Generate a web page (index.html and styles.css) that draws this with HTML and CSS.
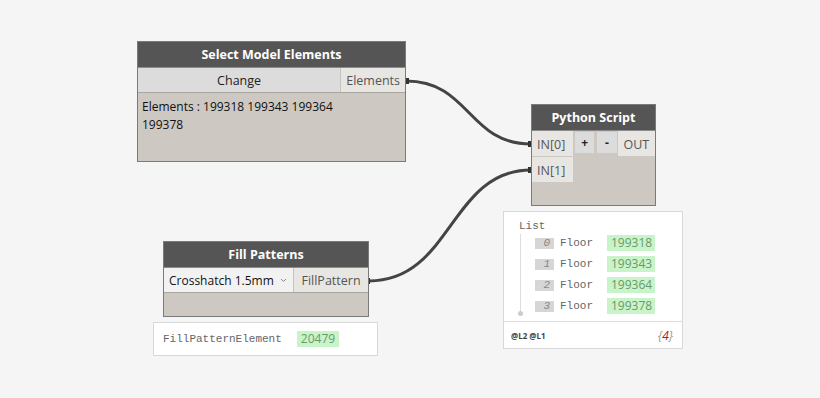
FILE: index.html
```html
<!DOCTYPE html>
<html lang="en">
<head>
    <meta charset="UTF-8">
    <title>Dynamo Graph</title>
    <link rel="stylesheet" href="styles.css">
</head>
<body>
    <div class="canvas">
        <!-- Wires -->
        <svg class="wires" width="820" height="398" viewBox="0 0 820 398">
            <path d="M406 81 C 470 81, 468 144, 531 144" />
            <path d="M369 281 C 452 281, 450 170, 531 170" />
            <rect class="plug" x="405" y="78" width="4" height="6" />
            <rect class="plug" x="528" y="141" width="4" height="6" />
            <rect class="plug" x="366" y="278" width="4" height="6" />
            <rect class="plug" x="528" y="167" width="4" height="6" />
        </svg>

        <!-- Select Model Elements -->
        <div class="node node-select">
            <div class="node-title">Select Model Elements</div>
            <div class="node-row">
                <div class="btn-wide">Change</div>
                <div class="port port-out">Elements</div>
            </div>
            <div class="node-body">
                Elements : 199318 199343 199364<br>199378
            </div>
        </div>

        <!-- Python Script -->
        <div class="node node-python">
            <div class="node-title">Python Script</div>
            <div class="py-grid">
                <div class="py-inputs">
                    <div class="port port-in">IN[0]</div>
                    <div class="port port-in">IN[1]</div>
                </div>
                <div class="py-btn">+</div>
                <div class="py-btn">-</div>
                <div class="port port-out py-out">OUT</div>
            </div>
        </div>

        <div class="watch watch-list">
            <div class="list-body">
                <div class="list-head">List</div>
                <div class="list-items">
                    <div class="list-item"><span class="idx">0</span><span class="lbl">Floor</span><span class="val">199318</span></div>
                    <div class="list-item"><span class="idx">1</span><span class="lbl">Floor</span><span class="val">199343</span></div>
                    <div class="list-item"><span class="idx">2</span><span class="lbl">Floor</span><span class="val">199364</span></div>
                    <div class="list-item"><span class="idx">3</span><span class="lbl">Floor</span><span class="val">199378</span></div>
                </div>
            </div>
            <div class="list-foot">
                <span class="levels">@L2 @L1</span>
                <span class="count">{<em>4</em>}</span>
            </div>
        </div>

        <!-- Fill Patterns -->
        <div class="node node-fill">
            <div class="node-title">Fill Patterns</div>
            <div class="node-row">
                <div class="dropdown">
                    <span>Crosshatch 1.5mm</span>
                    <svg width="7" height="5" viewBox="0 0 7 5"><path d="M1 1 L3.5 3.5 L6 1" /></svg>
                </div>
                <div class="port port-out">FillPattern</div>
            </div>
        </div>

        <div class="watch watch-fill">
            <span class="mono">FillPatternElement</span>
            <span class="val">20479</span>
        </div>
    </div>
</body>
</html>
```

FILE: styles.css
```css
/* General Reset */
* {
    margin: 0;
    padding: 0;
    box-sizing: border-box;
}

body {
    background-color: #f5f5f5;
    font-family: 'Open Sans', 'Noto Sans', sans-serif;
    color: #222;
}

/* Canvas */
.canvas {
    position: relative;
    width: 820px;
    height: 398px;
    overflow: hidden;
}

.wires {
    position: absolute;
    left: 0;
    top: 0;
}

.wires path {
    fill: none;
    stroke: #444;
    stroke-width: 3;
}

.wires .plug {
    fill: #333;
}

/* Nodes */
.node {
    position: absolute;
    border: 1px solid #7a7a7a;
    background: #cdc9c2;
    display: flex;
    flex-direction: column;
}

.node-title {
    height: 26px;
    background: #555;
    color: #fff;
    font-weight: bold;
    font-size: 12.5px;
    display: flex;
    align-items: center;
    justify-content: center;
    border-bottom: 1px solid #8c8c8c;
}

.node-row {
    display: flex;
    height: 25px;
    border-bottom: 1px solid #a9a6a0;
}

.node-select {
    left: 137px;
    top: 41px;
    width: 269px;
    height: 121px;
}

.btn-wide {
    flex: 1;
    background: #dcdcdc;
    font-size: 12.5px;
    display: flex;
    align-items: center;
    justify-content: center;
    padding-top: 1px;
    border-right: 1px solid #c4c4c4;
}

.port {
    background: #e8e6e2;
    color: #555;
    font-size: 12.5px;
    display: flex;
    align-items: center;
    padding: 1px 5px 0;
}

.node-body {
    padding: 5px 4px;
    font-size: 12px;
    line-height: 18px;
    color: #111;
}

/* Python */
.node-python {
    left: 531px;
    top: 104px;
    width: 125px;
    height: 102px;
}

.py-grid {
    display: flex;
    align-items: flex-start;
    gap: 2px;
}

.py-inputs {
    display: flex;
    flex-direction: column;
    gap: 1px;
    width: 42px;
}

.port-in {
    height: 25px;
    font-size: 12.5px;
}

.py-btn {
    width: 20px;
    height: 21px;
    margin-top: 1px;
    background: #dcdcdc;
    font-size: 12px;
    font-weight: bold;
    display: flex;
    align-items: center;
    justify-content: center;
    color: #222;
}

.py-btn + .py-btn {
    margin-left: 1px;
}

.py-out {
    height: 25px;
    width: 38px;
    margin-left: -1px;
    justify-content: center;
}

/* Watch bubbles */
.watch {
    position: absolute;
    background: #fff;
    border: 1px solid #d8d8d8;
    font-family: 'Liberation Mono', 'DejaVu Sans Mono', monospace;
    font-size: 11px;
    color: #666;
}

.watch-list {
    left: 503px;
    top: 211px;
    width: 180px;
    height: 138px;
    display: flex;
    flex-direction: column;
}

.list-body {
    flex: 1;
    padding: 7px 0 0 15px;
    position: relative;
}

.list-body::before {
    content: "";
    position: absolute;
    left: 16px;
    top: 22px;
    height: 77px;
    border-left: 1px solid #ddd;
}

.list-body::after {
    content: "";
    position: absolute;
    left: 14px;
    top: 99px;
    width: 5px;
    height: 5px;
    border-radius: 50%;
    background: #ccc;
}

.list-head {
    height: 14px;
    line-height: 14px;
}

.list-items {
    padding: 2px 0 0 16px;
    display: flex;
    flex-direction: column;
    gap: 5px;
}

.list-item {
    display: flex;
    align-items: center;
    height: 16px;
}

.idx {
    width: 19px;
    height: 11px;
    background: #d6d6d6;
    color: #888;
    font-size: 11px;
    font-style: italic;
    text-align: right;
    padding-right: 4px;
    line-height: 11px;
}

.lbl {
    margin-left: 6px;
    width: 47px;
}

.val {
    background: #c9f3c9;
    color: #6a9a6a;
    font-family: 'Open Sans', 'Noto Sans', sans-serif;
    font-size: 12px;
    padding: 0 4px;
    height: 16px;
    line-height: 16px;
}

.list-item .val {
    width: 48px;
}

.list-foot {
    height: 27px;
    border-top: 1px solid #ddd;
    display: flex;
    align-items: center;
    justify-content: space-between;
    padding: 0 9px 0 7px;
}

.levels {
    font-family: 'Open Sans', 'Noto Sans', sans-serif;
    font-size: 8px;
    font-weight: bold;
    color: #444;
}

.count {
    font-family: 'Open Sans', 'Noto Sans', sans-serif;
    font-style: italic;
    font-size: 12px;
    color: #999;
}

.count em {
    color: #b02020;
}

/* Fill patterns */
.node-fill {
    left: 163px;
    top: 241px;
    width: 206px;
    height: 76px;
}

.dropdown {
    width: 130px;
    background: #f2f2f2;
    border-right: 1px solid #c4c4c4;
    display: flex;
    align-items: center;
    justify-content: space-between;
    padding: 1px 6px 0 5px;
    font-size: 12px;
    color: #111;
}

.dropdown svg path {
    fill: none;
    stroke: #888;
    stroke-width: 1;
}

.node-fill .port-out {
    flex: 1;
    justify-content: center;
}

.watch-fill {
    left: 153px;
    top: 322px;
    width: 225px;
    height: 34px;
    display: flex;
    align-items: center;
    padding-left: 9px;
    gap: 15px;
}
```
